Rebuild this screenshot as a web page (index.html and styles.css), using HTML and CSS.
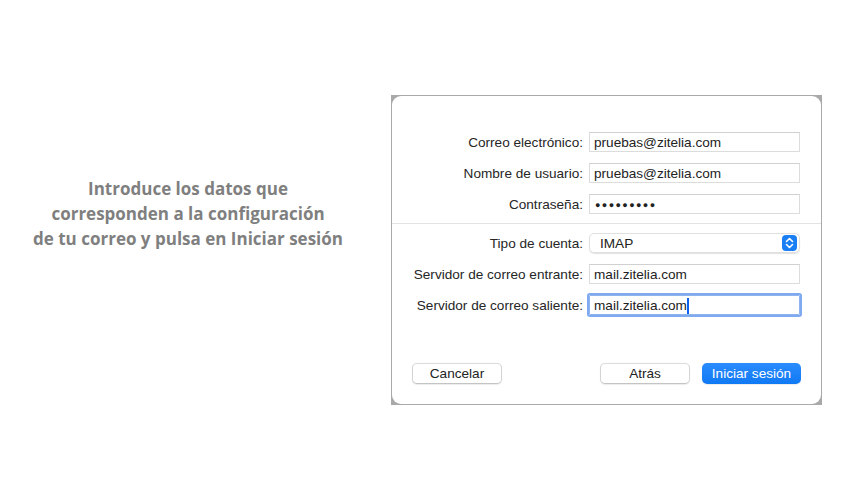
FILE: index.html
```html
<!DOCTYPE html>
<html>
<head>
  <meta charset="UTF-8">
  <title>Configuración de correo</title>
  <link rel="stylesheet" href="styles.css">
</head>
<body>
  <div class="page">
    <p class="intro">Introduce los datos que<br>corresponden a la configuración<br>de tu correo y pulsa en Iniciar sesión</p>

    <div class="dialog">
      <div class="sheet">
        <div class="form">
          <label>Correo electrónico:</label>
          <div class="field">pruebas@zitelia.com</div>
          <label>Nombre de usuario:</label>
          <div class="field">pruebas@zitelia.com</div>
          <label>Contraseña:</label>
          <div class="field dots">●●●●●●●●●</div>
        </div>

        <div class="separator"></div>

        <div class="form">
          <label>Tipo de cuenta:</label>
          <div class="popup">
            <span>IMAP</span>
            <span class="stepper">
              <svg width="9" height="12" viewBox="0 0 9 12">
                <path d="M1.5 4.5 L4.5 1.5 L7.5 4.5 M1.5 7.5 L4.5 10.5 L7.5 7.5" fill="none" stroke="#fff" stroke-width="1.6" stroke-linecap="round" stroke-linejoin="round"/>
              </svg>
            </span>
          </div>
          <label>Servidor de correo entrante:</label>
          <div class="field">mail.zitelia.com</div>
          <label>Servidor de correo saliente:</label>
          <div class="field focused">mail.zitelia.com<span class="caret"></span></div>
        </div>

        <div class="buttons">
          <button class="btn">Cancelar</button>
          <span class="spacer"></span>
          <button class="btn">Atrás</button>
          <button class="btn primary">Iniciar sesión</button>
        </div>
      </div>
    </div>
  </div>
</body>
</html>
```

FILE: styles.css
```css
body {
  margin: 0;
  background-color: #ffffff;
  font-family: "Liberation Sans", Arial, sans-serif;
}
.page {
  display: flex;
  align-items: flex-start;
  height: 500px;
}
.intro {
  width: 376px;
  margin: 176px 0 0 0;
  text-align: center;
  font-family: "Open Sans", sans-serif;
  font-weight: 700;
  font-size: 17px;
  line-height: 25px;
  color: #7f7f7f;
}
.dialog {
  margin: 95px 0 0 15px;
  width: 429px;
  height: 308px;
  border: 1px solid #a9a9a9;
  background-color: #a9a9a9;
}
.sheet {
  height: 100%;
  background-color: #ffffff;
  border-radius: 9px;
  display: flex;
  flex-direction: column;
}
.form {
  display: grid;
  grid-template-columns: 1fr 211px;
  column-gap: 6px;
  row-gap: 11px;
  padding: 0 21px 0 0;
  align-items: center;
}
.form:first-child {
  padding-top: 36px;
}
label {
  text-align: right;
  font-size: 13.6px;
  color: #262626;
}
.field {
  height: 20px;
  line-height: 20px;
  border: 1px solid #dcdcdc;
  border-top-color: #d0d0d0;
  padding: 0 4px;
  font-size: 13.6px;
  color: #222;
  box-sizing: border-box;
}
.dots {
  font-size: 9px;
  letter-spacing: 1.4px;
  padding-left: 5px;
}
.focused {
  border-color: #8fb3ee;
  box-shadow: 0 0 0 2px #80aaf0;
  border-radius: 1px;
}
.caret {
  display: inline-block;
  width: 2px;
  height: 16px;
  background-color: #0d60f0;
  vertical-align: -4px;
}
.separator {
  height: 1px;
  background-color: #e2e2e2;
  margin: 9px 0 9px 0;
}
.popup {
  height: 20px;
  box-sizing: border-box;
  display: flex;
  align-items: center;
  justify-content: space-between;
  padding: 0 2px 0 10px;
  border-radius: 5px;
  border: 1px solid #e0e0e0;
  box-shadow: 0 1px 1px rgba(0, 0, 0, 0.12);
  font-size: 13.6px;
  color: #222;
}
.stepper {
  width: 15px;
  height: 16px;
  border-radius: 4px;
  background-color: #1a7ff5;
  display: flex;
  align-items: center;
  justify-content: center;
}
.buttons {
  margin-top: auto;
  display: flex;
  gap: 12px;
  padding: 0 20px 20px 20px;
}
.spacer {
  flex: 1;
}
.btn {
  height: 21px;
  width: 90px;
  padding: 0;
  border: 1px solid #d4d4d4;
  border-top-color: #dcdcdc;
  border-bottom-color: #c4c4c4;
  border-radius: 5px;
  background-color: #ffffff;
  font-family: "Liberation Sans", Arial, sans-serif;
  font-size: 13.6px;
  color: #222;
  box-shadow: 0 0.5px 1px rgba(0, 0, 0, 0.08);
}
.btn.primary {
  width: 99px;
  border: none;
  background: linear-gradient(#2b8cfd, #0f79f4);
  color: #ffffff;
}
```
